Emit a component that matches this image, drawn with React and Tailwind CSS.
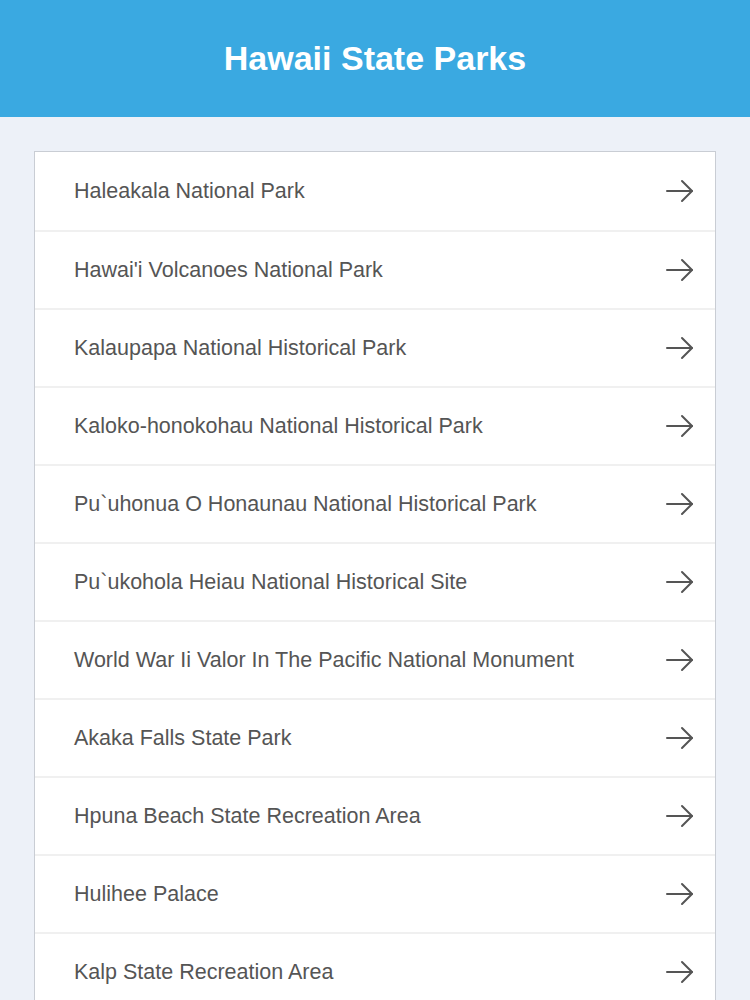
import React from 'react';

const parks = [
  'Haleakala National Park',
  "Hawai'i Volcanoes National Park",
  'Kalaupapa National Historical Park',
  'Kaloko-honokohau National Historical Park',
  'Pu`uhonua O Honaunau National Historical Park',
  'Pu`ukohola Heiau National Historical Site',
  'World War Ii Valor In The Pacific National Monument',
  'Akaka Falls State Park',
  'Hpuna Beach State Recreation Area',
  'Hulihee Palace',
  'Kalp State Recreation Area',
];

const Arrow = () => (
  <svg width="30" height="24" viewBox="0 0 30 24" fill="none" stroke="#555555" strokeWidth="2" strokeLinecap="round" strokeLinejoin="round">
    <path d="M2 12h25" />
    <path d="M17 2l10 10-10 10" />
  </svg>
);

export default function App() {
  return (
    <div className="h-screen overflow-hidden bg-[#edf1f8]" style={{ fontFamily: '"Liberation Sans", Arial, sans-serif' }}>
      <header className="h-[117px] bg-[#3aa9e1] flex items-center justify-center">
        <h1 className="text-white text-[34px] font-bold">Hawaii State Parks</h1>
      </header>

      <div className="px-[34px] pt-[34px]">
        <ul className="bg-white border border-[#c9cdd4]">
          {parks.map((name, i) => (
            <li
              key={name}
              className={`h-[78px] flex items-center justify-between pl-[39px] pr-[20px] ${i > 0 ? 'border-t-2 border-[#f0f0f0]' : ''}`}
            >
              <span className="text-[21.5px] text-[#555555]">{name}</span>
              <Arrow />
            </li>
          ))}
        </ul>
      </div>
    </div>
  );
}
